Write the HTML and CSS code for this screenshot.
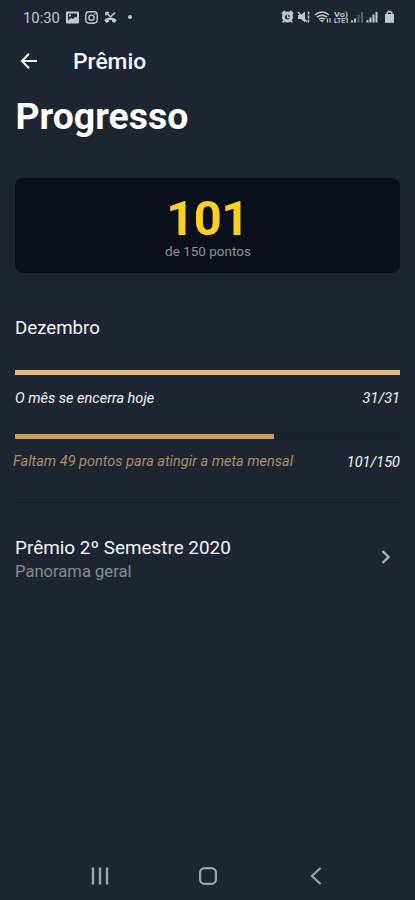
FILE: index.html
```html
<!DOCTYPE html>
<html lang="pt-BR">
<head>
<meta charset="utf-8">
<meta name="viewport" content="width=device-width, initial-scale=1">
<title>Prêmio</title>
<link rel="stylesheet" href="styles.css">
</head>
<body>
<div class="screen">
  <div class="status">
    <div class="status-left">
      <span class="clock">10:30</span>
      <svg width="13" height="13" viewBox="0 0 13 13"><path fill="currentColor" fill-rule="evenodd" d="M1 .5h11q1 0 1 1v10q0 1-1 1H1q-1 0-1-1v-10q0-1 1-1zM2 2.500v7l3-2.500 2 1 2-2 2 .5v-4zM3 3.500h2v2H3z"/></svg>
      <svg width="13" height="13" viewBox="0 0 13 13" fill="none" stroke="currentColor" stroke-width="1.400"><rect x=".8" y=".8" width="11.400" height="11.400" rx="3.400"/><circle cx="6.500" cy="6.700" r="2.600"/><path d="M9.300 3.200h1"/></svg>
      <svg width="13" height="13" viewBox="0 0 13 13"><path d="M2 1.500l4.500 4.500 4.500-4.500M2 4.500v-3h3" fill="none" stroke="currentColor" stroke-width="1.500"/><path fill="currentColor" d="M6.500 6.500c2.600 0 4.700 1 6.300 2.700L10.400 12 8 10.500V8.900H5v1.600L2.600 12 .2 9.200C1.800 7.500 3.900 6.500 6.500 6.500z"/></svg>
      <i class="dot"></i>
    </div>
    <svg class="status-right" width="116" height="16" viewBox="0 0 116 16">
      <g fill="none" stroke="currentColor">
        <path stroke-width="2" d="M1 5l3-3M9 2l3 3"/>
        <circle cx="6.500" cy="8" r="4" stroke-width="3"/>
        <path stroke-width="1.300" d="M6.500 5.500V8.500h2.300M3 12l-1.500 1.500M10 12l1.500 1.500"/>
        <path stroke-width="1.300" d="M17 3l9 10"/>
        <path stroke-width="1.500" stroke-dasharray="3 1" d="M27.500 2.500v11"/>
        <path stroke-width="1.600" d="M34 6q7-6 14 0M36 8.200q5-4 10 0M38 10.200q3-2 6 0"/>
        <path stroke-width="1.200" d="M46.500 13.500v-4M49 9v4.500"/>
      </g>
      <g fill="currentColor">
        <path d="M17 6h3l4-3.500v11L20 10h-3zM39 11h4l-2 2.500z"/>
        <text class="tiny" x="53" y="7.500" textLength="14" lengthAdjust="spacingAndGlyphs">Vo)</text>
        <text class="tiny" x="53" y="14" textLength="15" lengthAdjust="spacingAndGlyphs">LTE1</text>
        <path d="M70 11.500h2v2h-2zM73 9.500h2v4h-2z"/>
        <path opacity=".35" d="M76.500 6h2v7.500h-2zM80 3h2v10.500h-2z"/>
        <path d="M85.500 11h2v2.500h-2zM88.500 8.500h2v5h-2zM91.500 5.500h2v8h-2zM94.500 3h2v10.500h-2z"/>
        <path fill-rule="evenodd" d="M105.500 5V3h1V1.800h4V3h1v2h1.500v8.700h-9V5zM107 5h3V3.500h-3z"/>
      </g>
    </svg>
  </div>
  <header class="appbar">
    <svg width="18" height="18" viewBox="0 0 18 18" fill="none" stroke="currentColor" stroke-width="2"><path d="M17 9H2.500M9 1.800L2 9l7 7.200"/></svg>
    <span class="bar-title">Prêmio</span>
  </header>
  <main>
    <h1><span>Progresso</span></h1>
    <section class="card">
      <div class="score">101</div>
      <div class="total">de 150 pontos</div>
    </section>
    <h2><span>Dezembro</span></h2>
    <div class="track"><div class="fill full"></div></div>
    <div class="row month"><span>O mês se encerra hoje</span><span class="days">31/31</span></div>
    <div class="track second"><div class="fill goal"></div></div>
    <div class="row missing"><span class="hint">Faltam 49 pontos para atingir a meta mensal</span><span class="points">101/150</span></div>
    <hr>
    <div class="prize">
      <div>
        <div class="prize-title">Prêmio 2º Semestre 2020</div>
        <div class="prize-sub">Panorama geral</div>
      </div>
      <svg class="chevron" width="10" height="16" viewBox="0 0 10 16" fill="none" stroke="currentColor" stroke-width="2.300"><path d="M1.500 2L7.500 8l-6 6"/></svg>
    </div>
  </main>
  <nav>
    <svg width="18" height="18" viewBox="0 0 18 18" fill="none" stroke="currentColor" stroke-width="2.400"><path d="M2 .5v17M9 .5v17M16 .5v17"/></svg>
    <svg width="18" height="18" viewBox="0 0 18 18" fill="none" stroke="currentColor" stroke-width="2.200"><rect x="1.100" y="1.100" width="15.800" height="15.800" rx="4.500"/></svg>
    <svg width="18" height="18" viewBox="0 0 18 18" fill="none" stroke="currentColor" stroke-width="2.200"><path d="M13.500 1L5 9l8.500 8"/></svg>
  </nav>
</div>
</body>
</html>
```
FILE: styles.css
```css
* { box-sizing: border-box; }
body { margin: 0; background: #1e2532; font-family: Roboto, sans-serif; color: #f4f5f8; }
svg { display: block; flex: none; }
.screen { width: 415px; height: 900px; display: flex; flex-direction: column; overflow: hidden; }
.status { height: 34px; padding: 0 18px 0 23px; display: flex; align-items: center; justify-content: space-between; color: #c3c8d2; }
.status-left { display: flex; align-items: center; gap: 6px; }
.clock { padding-top: 2px; font-size: 14.800px; line-height: 32px; }
.dot { width: 4px; height: 4px; margin-left: 5px; border-radius: 50%; background: currentColor; }
.tiny { font-size: 7px; font-weight: 700; }
.appbar { height: 56px; padding: 0 20px 2px; display: flex; align-items: center; }
.bar-title { margin-left: 35px; padding-top: 1px; font-size: 22.800px; font-weight: 500; }
main { flex: 1; padding: 0 15px; }
h1 { margin: 0; height: 88px; font-size: 37.400px; line-height: 53px; font-weight: 700; color: #fff; }
h1 span { margin-left: 0.500px; }
.card { height: 95px; padding-top: 16px; border-radius: 8px; background: #0a101b; text-align: center; }
.score { font-size: 49px; line-height: 50px; font-weight: 700; letter-spacing: -0.600px; color: #fbd01f; }
.total { padding-left: 1px; font-size: 13.500px; line-height: 15px; color: #8d929b; }
h2 { margin: 42px 0 0; font-size: 18.700px; line-height: 26px; font-weight: 400; }
.track { height: 5px; margin-top: 29px; background: #1b212d; }
.fill { height: 5px; background: #dfb98a; }
.full { width: 100%; }
.goal { width: 67.200%; background: #c6a069; }
.row { display: flex; justify-content: space-between; font-size: 14.500px; line-height: 20px; font-style: italic; }
.month { margin-top: 14px; }
.second { margin-top: 25px; }
.missing { margin-top: 13px; }
.hint { margin-left: -2px; color: #a98e66; }
.points { padding-top: 1px; }
hr { margin: 29px 0 0; border: 0; height: 1px; background: #161c27; }
.prize { margin-top: 32px; padding-right: 9px; display: flex; justify-content: space-between; align-items: center; color: #aeb2ba; }
.prize-title { font-size: 18.900px; line-height: 26px; color: #f4f5f8; }
.prize-sub { font-size: 16.600px; line-height: 22px; color: #858a94; }
.chevron { margin-bottom: 4px; }
nav { height: 48px; padding: 0 90px 0 91px; display: flex; justify-content: space-between; align-items: center; color: #9da3af; }
```
